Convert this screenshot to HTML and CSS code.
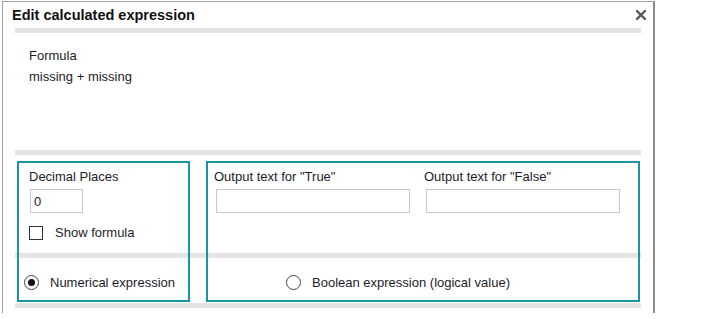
FILE: index.html
```html
<!DOCTYPE html>
<html lang="en">
<head>
  <meta charset="UTF-8">
  <title>Edit calculated expression</title>
  <link rel="stylesheet" href="styles.css">
</head>
<body>

  <div class="dialog">
    <div class="titlebar">
      <span class="title">Edit calculated expression</span>
      <svg class="close" width="10" height="10" viewBox="0 0 10 10">
        <path d="M1 1 L9 9 M9 1 L1 9" stroke="#5a5a5a" stroke-width="2.4" stroke-linecap="square"/>
      </svg>
    </div>
    <div class="bar"></div>

    <div class="formula">
      <div>Formula</div>
      <div>missing + missing</div>
    </div>
    <div class="bar"></div>

    <div class="options">
      <div class="box box-num">
        <div class="box-top">
          <div class="label">Decimal Places</div>
          <input class="field field-small" type="text" value="0">
          <label class="check"><span class="checkbox"></span>Show formula</label>
        </div>
        <div class="box-bottom">
          <label class="radio-row"><span class="radio checked"></span>Numerical expression</label>
        </div>
      </div>

      <div class="box box-bool">
        <div class="box-top cols">
          <div class="col">
            <div class="label">Output text for "True"</div>
            <input class="field" type="text">
          </div>
          <div class="col">
            <div class="label">Output text for "False"</div>
            <input class="field" type="text">
          </div>
        </div>
        <div class="box-bottom">
          <label class="radio-row bool"><span class="radio"></span>Boolean expression (logical value)</label>
        </div>
      </div>
    </div>
    <div class="bar bar-last"></div>
  </div>

</body>
</html>
```

FILE: styles.css
```css
* { margin: 0; padding: 0; box-sizing: border-box; }
body { font-family: "Liberation Sans", Arial, sans-serif; font-size: 13px; color: #1c1c2a; background: #fff; }

.dialog { width: 653px; margin: 1px 0 0 2px; padding: 0 12px 5px; border: solid #a0a0a0; border-width: 1px 2px 0 1px; border-right-color: #8c8c8c; }

.titlebar { height: 26px; display: flex; justify-content: space-between; align-items: center; margin: 0 -12px; padding: 0 7px 0 9px; }
.title { font-size: 14.5px; font-weight: bold; color: #111; }

.bar { height: 5px; background: #e4e4e4; }
.bar-last { margin-top: 1px; }

.formula { height: 117px; padding: 12px 0 0 14px; line-height: 21px; }

.options { display: flex; gap: 16px; margin-top: 6px; padding: 0 1px 0 2px; background: linear-gradient(to bottom, transparent 92px, #e4e4e4 92px, #e4e4e4 97px, transparent 97px); }
.box { height: 141px; border: 2px solid #1797a6; }
.box-num { width: 173px; }
.box-bool { flex: 1; }

.box-top { height: 90px; line-height: 16px; }
.box-num .box-top { padding: 6px 0 0 10px; }
.box-bottom { height: 47px; padding-top: 12px; display: flex; align-items: center; }

.label { line-height: 16px; }
.field { display: block; height: 24px; margin-top: 4px; padding: 0 3px; border: 1px solid #c8c8c8; font: inherit; color: inherit; background: #fff; outline: none; }
.field-small { width: 53px; margin-left: 1px; }

.cols { display: flex; gap: 14px; padding: 6px 0 0 6px; }
.col { width: 196px; }
.col .field { width: 194px; margin-left: 2px; }

.check { display: flex; align-items: center; gap: 12px; margin-top: 12px; }
.checkbox { width: 14px; height: 14px; border: 1px solid #333; background: #fff; }

.radio-row { display: flex; align-items: center; gap: 11px; margin-left: 5px; line-height: 16px; }
.radio-row.bool { margin-left: 78px; }
.radio { width: 15px; height: 15px; border: 1px solid #444; border-radius: 50%; background: #fff; display: flex; align-items: center; justify-content: center; }
.radio.checked::after { content: ""; width: 7px; height: 7px; border-radius: 50%; background: #111; }
```
